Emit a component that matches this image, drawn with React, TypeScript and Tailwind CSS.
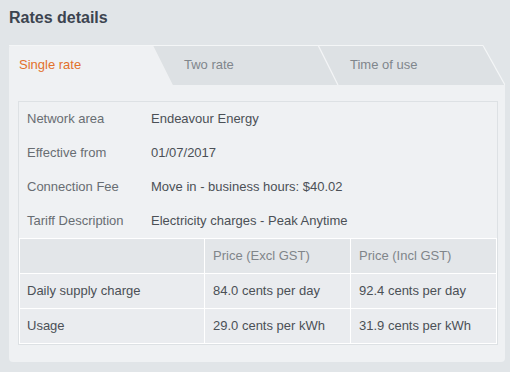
const details = [
  { label: 'Network area', value: 'Endeavour Energy' },
  { label: 'Effective from', value: '01/07/2017' },
  { label: 'Connection Fee', value: 'Move in - business hours: $40.02' },
  { label: 'Tariff Description', value: 'Electricity charges - Peak Anytime' },
];

const prices = [
  { name: 'Daily supply charge', excl: '84.0 cents per day', incl: '92.4 cents per day' },
  { name: 'Usage', excl: '29.0 cents per kWh', incl: '31.9 cents per kWh' },
];

function TabShapes() {
  // tab backgrounds with the slanted edges
  return (
    <svg className="absolute inset-0" width="496" height="40" viewBox="0 0 496 40">
      <path d="M0 3 Q0 0 3 0 L144 0 L164 40 L0 40 Z" fill="#eff1f3" />
      <path d="M144 0 L474 0 L496 40 L164 40 Z" fill="#dde1e4" />
      <path d="M0 0.5 L474 0.5" stroke="#f4f6f7" strokeWidth="1" />
      <path d="M309 0 L329 40" stroke="#f4f6f7" strokeWidth="1.2" />
      <path d="M474 0.5 L496 40" stroke="#f4f6f7" strokeWidth="1.2" />
    </svg>
  );
}

export default function App() {
  return (
    <div
      className="w-[510px] h-[372px] bg-[#e1e5e8] pl-[9px] pt-[9px] overflow-hidden"
      style={{ fontFamily: '"Liberation Sans", Arial, sans-serif' }}
    >
      <h2 className="text-[16px] leading-[18px] font-bold text-[#3c4450]">Rates details</h2>

      <div className="mt-[18px] w-[496px]">
        {/* Tabs */}
        <div className="relative h-[40px]">
          <TabShapes />
          <div className="relative flex h-full items-center text-[13px]">
            <div className="w-[164px] pl-[10px] text-[#e2702b]">Single rate</div>
            <div className="w-[165px] pl-[11px] text-[#80868c]">Two rate</div>
            <div className="pl-[12px] text-[#80868c]">Time of use</div>
          </div>
        </div>

        {/* Panel body */}
        <div className="bg-[#eff1f3] rounded-b-[4px] pl-[9px] pr-[7px] pt-[16px] pb-[17px]">
          <div className="border border-[#dde1e4] text-[13px]">
            {details.map((d) => (
              <div key={d.label} className="flex h-[34px] items-center pl-[8px]">
                <div className="w-[124px] text-[#686d72]">{d.label}</div>
                <div className="text-[#4b5056]">{d.value}</div>
              </div>
            ))}
            <table className="w-full border-collapse">
              <thead>
                <tr className="bg-[#e3e6e9]">
                  <th className="w-[185px] h-[35px] border border-white"></th>
                  <th className="w-[146px] h-[35px] border border-white pl-[8px] text-left font-normal text-[#80858a]">
                    Price (Excl GST)
                  </th>
                  <th className="h-[35px] border border-white pl-[8px] text-left font-normal text-[#80858a]">
                    Price (Incl GST)
                  </th>
                </tr>
              </thead>
              <tbody>
                {prices.map((p) => (
                  <tr key={p.name} className="bg-[#eaecef] text-[#4b5056]">
                    <td className="h-[35px] border border-white pl-[7px]">{p.name}</td>
                    <td className="h-[35px] border border-white pl-[8px]">{p.excl}</td>
                    <td className="h-[35px] border border-white pl-[8px]">{p.incl}</td>
                  </tr>
                ))}
              </tbody>
            </table>
          </div>
        </div>
      </div>
    </div>
  );
}
